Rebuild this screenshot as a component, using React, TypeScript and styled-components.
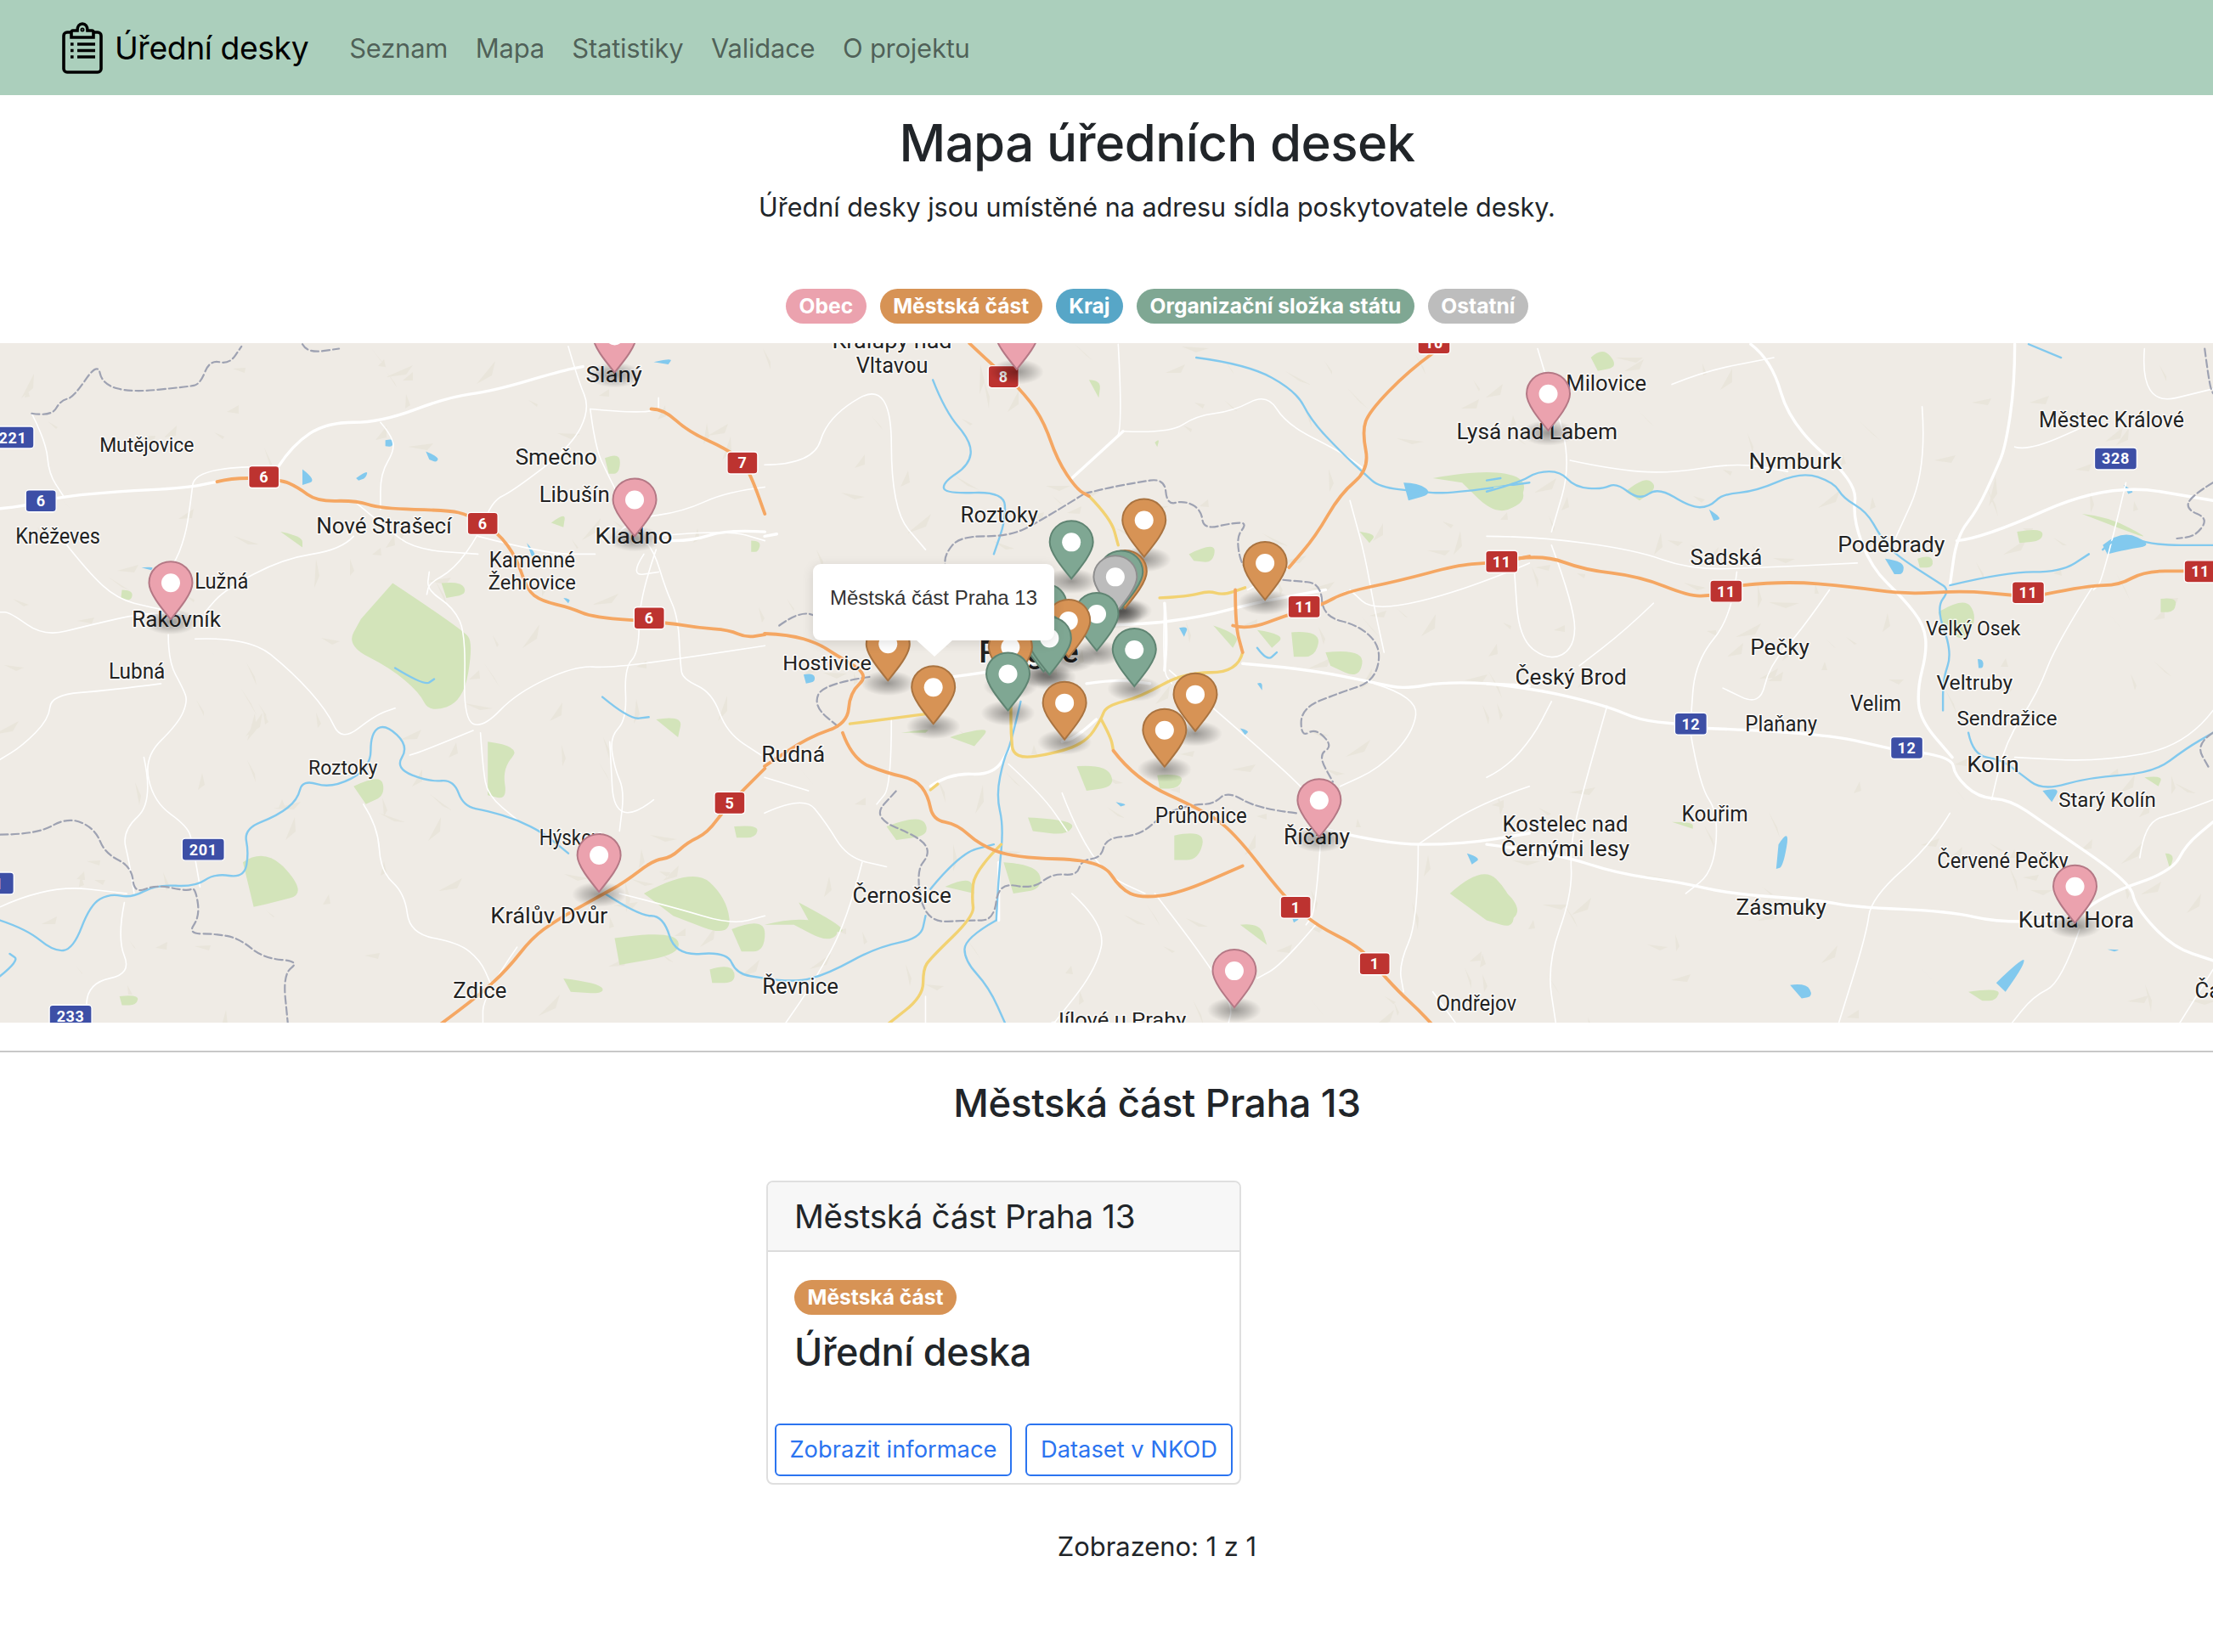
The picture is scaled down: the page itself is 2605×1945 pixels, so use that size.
import React from "react";
import styled, { createGlobalStyle } from "styled-components";

const Global = createGlobalStyle`
  html, body { margin: 0; padding: 0; background: #fff; }
  body { font-family: Inter, "Noto Sans", "Liberation Sans", sans-serif; color: #212529; }
  * { box-sizing: border-box; }
`;

const Navbar = styled.nav`
  height: 112px;
  background: #abcfbc;
  display: flex;
  align-items: center;
  padding-left: 73px;
`;
const Brand = styled.a`
  display: flex;
  align-items: center;
  gap: 14px;
  font-size: 37.3px;
  letter-spacing: -0.4px;
  color: #000;
  margin-right: 48px;
`;
const NavList = styled.div`
  display: flex;
  gap: 32.5px;
`;
const NavLink = styled.a`
  font-size: 31px;
  letter-spacing: -0.25px;
  color: rgba(0, 0, 0, 0.55);
`;
const Intro = styled.header`
  padding-left: 119px;
  text-align: center;
`;
const Title = styled.h1`
  margin: 0;
  padding-top: 22px;
  font-size: 60px;
  line-height: 68px;
  font-weight: 500;
  letter-spacing: -0.6px;
`;
const Lead = styled.p`
  margin: 21px 0 0;
  font-size: 30.5px;
  line-height: 42px;
`;
const BadgeRow = styled.div`
  display: flex;
  justify-content: center;
  gap: 16px;
  margin-top: 75px;
`;
const Badge = styled.span<{ $c: string }>`
  display: inline-block;
  height: 41px;
  line-height: 40px;
  padding: 0 15.5px;
  border-radius: 20.5px;
  background: ${(p) => p.$c};
  color: #fff;
  font-size: 24.6px;
  font-weight: 700;
  white-space: nowrap;
`;
const MapBox = styled.div`
  position: relative;
  height: 800px;
  margin-top: 23px;
  overflow: hidden;
  background: #efebe5;
`;
const MapSvg = styled.svg`
  display: block;
  width: 2605px;
  height: 800px;
`;
const Line = styled.path<{ $k: string }>`
  fill: none;
  stroke-linejoin: round;
  stroke-linecap: round;
  vector-effect: non-scaling-stroke;
  stroke: ${(p) => ({ thin: "#ffffff", main: "#ffffff", water: "#82c9ee", border: "#9ea2b2", yellow: "#f2d272", orange: "#f5a763" } as Record<string, string>)[p.$k]};
  stroke-width: ${(p) => ({ thin: 1.6, main: 3.4, water: 2.4, border: 2.2, yellow: 3.4, orange: 3.8 } as Record<string, number>)[p.$k]}px;
  stroke-dasharray: ${(p) => (p.$k === "border" ? "9 4" : "none")};
`;
const Patch = styled.path<{ $c: string }>`
  fill: ${(p) => p.$c};
  stroke: none;
`;
const ShieldBox = styled.rect<{ $blue?: boolean }>`
  fill: ${(p) => (p.$blue ? "#3d4fa6" : "#bd3330")};
  stroke: #fff;
  stroke-width: 1.4px;
`;
const ShieldText = styled.text`
  fill: #fff;
  font-family: Roboto, "Liberation Sans", sans-serif;
  font-size: 18px;
  font-weight: 700;
  text-anchor: middle;
  letter-spacing: 0.6px;
`;
const Place = styled.text<{ $s: number; $w?: number }>`
  fill: #222;
  font-family: Roboto, "Liberation Sans", sans-serif;
  font-size: ${(p) => p.$s}px;
  font-weight: ${(p) => p.$w ?? 400};
  text-anchor: middle;
  paint-order: stroke;
  stroke: rgba(255, 255, 255, 0.75);
  stroke-width: 3px;
  stroke-linejoin: round;
`;
const PinBody = styled.path<{ $f: string; $s: string }>`
  fill: ${(p) => p.$f};
  stroke: ${(p) => p.$s};
  stroke-width: 2px;
`;
const PinDot = styled.circle`
  fill: #fff;
`;
const Tooltip = styled.div`
  position: absolute;
  left: 957px;
  top: 260px;
  width: 284px;
  height: 90px;
  background: #fff;
  border-radius: 9px;
  padding-top: 26px;
  text-align: center;
  font-family: "Liberation Sans", Arial, sans-serif;
  font-size: 24px;
  line-height: 28px;
  color: #333;
  box-shadow: 0 3px 14px rgba(0, 0, 0, 0.12);
  &::after {
    content: "";
    position: absolute;
    left: 122px;
    top: 90px;
    border-left: 21px solid transparent;
    border-right: 21px solid transparent;
    border-top: 19px solid #fff;
  }
`;
const Divider = styled.hr`
  margin: 33px 0 0;
  border: 0;
  border-top: 2px solid #c8c8c8;
`;
const ResultTitle = styled.h2`
  margin: 32px 0 0;
  padding-left: 119px;
  text-align: center;
  font-size: 45.5px;
  line-height: 56px;
  font-weight: 500;
  letter-spacing: -0.3px;
`;
const Results = styled.section`
  margin-top: 63px;
  padding-left: 902px;
`;
const Card = styled.article`
  width: 559px;
  height: 358px;
  border: 2px solid #dfdfdf;
  border-radius: 8px;
  display: flex;
  flex-direction: column;
  overflow: hidden;
`;
const CardHead = styled.div`
  height: 82px;
  background: #f7f7f7;
  border-bottom: 2px solid #dcdcdc;
  padding-left: 31px;
  font-size: 38.6px;
  line-height: 80px;
  font-weight: 400;
  letter-spacing: -0.3px;
`;
const CardBody = styled.div`
  flex: 1;
  padding: 33px 0 0 31px;
`;
const CardTitle = styled.h5`
  margin: 14px 0 0;
  font-size: 45px;
  line-height: 60px;
  font-weight: 500;
  letter-spacing: -0.4px;
`;
const CardFoot = styled.div`
  display: flex;
  gap: 16px;
  padding: 0 8px 8px;
`;
const OutlineBtn = styled.a<{ $w: number }>`
  display: block;
  width: ${(p) => p.$w}px;
  height: 62px;
  border: 2px solid #2b74f0;
  border-radius: 6px;
  color: #2b74f0;
  text-align: center;
  font-size: 27.3px;
  line-height: 58px;
`;
const Count = styled.p`
  margin: 53px 0 0;
  padding-left: 119px;
  text-align: center;
  font-size: 30.9px;
  line-height: 40px;
`;

const smooth = (s: string) => {
  const n = s.trim().split(/[\s,]+/).map(Number);
  const pts: [number, number][] = [];
  for (let i = 0; i + 1 < n.length; i += 2) pts.push([n[i], n[i + 1]]);
  let d = `M${pts[0][0]} ${pts[0][1]}`;
  for (let i = 1; i < pts.length - 1; i++) {
    const mx = (pts[i][0] + pts[i + 1][0]) / 2;
    const my = (pts[i][1] + pts[i + 1][1]) / 2;
    d += `Q${pts[i][0]} ${pts[i][1]} ${mx} ${my}`;
  }
  const l = pts[pts.length - 1];
  return d + `L${l[0]} ${l[1]}`;
};
const poly = (s: string) => smooth(s) + "Z";

type Layer = { t: string; green: string[]; lakes: string[]; thin: string[]; main: string[]; water: string[]; border: string[]; yellow: string[]; orange: string[] };

const LAYERS: Layer[] = [
  {
    t: "translate(0,-4) scale(.5742,.5258)",
    green: [
      "805 545 950 650 970 680 950 810 880 835 860 790 800 735 710 685 740 625",
      "905 545 945 540 958 570 915 578",
      "1240 265 1272 250 1270 300 1248 300",
      "1130 410 1160 385 1155 420",
      "498 1170 545 1135 630 1240 560 1260 520 1270",
      "1000 900 1070 910 1030 960 1040 1030 1000 1020",
      "1260 1340 1380 1320 1400 1375 1270 1400",
      "1320 1240 1420 1180 1490 1250 1500 1340 1380 1290",
      "1500 1320 1568 1290 1568 1370 1520 1370",
      "1455 1410 1500 1395 1510 1440 1460 1440",
      "725 1000 780 970 790 1020 750 1040",
      "250 560 272 560 270 585 248 578",
      "575 430 620 440 620 465",
      "1345 850 1400 840 1390 890",
      "1505 1090 1555 1085 1550 1115 1510 1115",
      "1540 450 1560 450 1555 475 1540 475",
      "245 1470 285 1465 280 1490 250 1490",
      "1155 1430 1230 1440 1240 1465 1170 1460",
    ],
    lakes: [
      "873 250 900 262 895 275 880 268",
      "620 290 650 315 620 325",
      "790 225 808 220 805 240 790 238",
      "730 310 755 290 750 310 735 315",
      "1340 50 1380 40 1370 55",
      "1080 455 1100 480 1090 485",
      "1155 578 1170 580 1165 590",
      "290 510 315 508 310 516",
    ],
    thin: [
      "1165 15 1185 90 1210 155 1170 240 1050 340 1010 360 980 440 930 515 880 545 875 570",
      "1210 155 1220 240 1245 300 1310 440 1340 470 1365 560 1390 620 1395 730 1400 760 1460 790 1490 880 1560 930",
      "1345 470 1310 580 1310 700 1280 735 1285 850 1250 890 1260 960 1280 1010 1270 1100",
      "1210 155 1350 170 1350 130",
      "1568 330 1490 340 1400 385 1300 400 1250 450",
      "1340 440 1490 425 1568 450",
      "980 440 1120 480 1220 480",
      "1568 685 1420 710 1250 735 1180 730 1060 790 990 870 950 850 955 660 930 600 875 560 880 520",
      "570 285 400 280 390 370 380 440 355 510 310 540",
      "780 185 800 210 810 245 780 300 780 380",
      "730 365 790 420 850 470 980 480",
      "725 440 700 470 580 490 460 560 420 610",
      "65 165 95 230 100 300 130 350",
      "130 450 180 520 240 580 310 600 390 615 300 610 180 640 90 665 20 610 0 610",
      "345 660 345 720 375 780 385 810 365 860 295 935 315 1035 385 1090 395 1130 410 1225",
      "400 670 510 665 600 745 670 830 700 900 770 840 810 825",
      "330 770 225 785 105 795 100 850 45 910 0 940",
      "295 935 315 1035 250 1100 265 1170 275 1240",
      "745 1040 775 1090 780 1190 830 1240 840 1330 940 1350 985 1390 1005 1440",
      "985 880 990 960 1000 1020 1060 1075",
      "1340 1030 1260 1100 1250 900",
      "255 1260 240 1340 270 1420 180 1440 175 1530",
      "0 1270 100 1220 260 1240",
      "970 875 870 920 840 930",
      "1060 1360 990 1470 990 1535",
      "1270 1240 1380 1270 1500 1310 1568 1290",
      "1320 480 1290 530 1350 520",
    ],
    main: [
      "0 378 55 372 120 352 240 340 380 332 445 318",
      "570 285 600 235 670 185 780 185 920 128 1010 115 1150 70 1195 60",
      "1568 430 1490 425 1420 450 1340 450",
    ],
    water: [
      "0 1300 55 1320 110 1370 150 1365 185 1265 225 1240 270 1250 320 1220 400 1225 440 1195 500 1205 510 1150 500 1095 570 1065 610 1030 620 985 680 1005 760 960 760 880 790 860 838 910 810 960 880 990 930 985 950 1045 1000 1055 1060 1075 1115 1105 1165 1150",
      "1240 1240 1310 1290 1360 1290 1385 1380 1490 1370 1510 1420 1568 1430",
      "0 1425 40 1390 20 1375",
      "810 735 870 775 890 760",
      "1235 800 1290 850 1330 845",
    ],
    border: [
      "65 165 105 172 125 135 150 130 200 50 210 100 270 118 385 105 410 100 430 45 470 55 495 15",
      "620 10 630 30 695 20",
      "0 1108 75 1108 140 1068 195 1095 215 1150 270 1180 275 1240 320 1220 385 1235 400 1225 410 1290 385 1330 440 1330 490 1340 540 1385 615 1392 580 1420 590 1530",
    ],
    yellow: [],
    orange: [
      "445 318 480 308 575 313 610 330 650 362 730 360 780 378 920 382 960 392 1020 430 1060 490 1080 560 1110 585 1170 600 1215 622 1365 633 1430 645 1495 650 1530 667 1568 660",
      "1335 155 1360 155 1410 205 1490 245 1525 275 1545 320 1568 390",
      "900 1535 975 1475 1040 1410 1090 1340 1140 1300 1230 1245 1280 1215 1340 1165 1375 1160 1410 1125 1450 1105 1490 1045 1568 960",
    ],
  },
  {
    t: "translate(900,-4) scale(.5742,.5258)",
    green: [
      "870 480 925 450 920 500 880 495",
      "1220 430 1255 435 1240 455",
      "0 1310 70 1290 160 1320 130 1350 60 1310",
      "370 1225 420 1200 430 1240",
      "250 1090 320 1060 340 1110 270 1120",
      "840 1110 905 1095 890 1165 840 1165",
      "975 1310 1015 1305 1030 1355",
      "1405 1240 1470 1175 1530 1240 1540 1320 1480 1300",
      "490 1170 560 1175 570 1230 510 1240",
      "70 1260 140 1300 170 1330 100 1320",
      "640 955 700 950 720 1000 660 1010",
      "1080 655 1140 650 1130 710 1085 710",
      "1150 700 1230 690 1220 760 1160 730",
      "1370 310 1470 290 1568 310 1540 380 1490 385 1430 320",
      "805 975 860 970 850 1005 810 1005",
      "920 640 975 660 960 690",
      "800 230 810 220 805 240",
      "665 90 690 90 685 130",
      "1010 650 1070 660 1040 690",
      "540 1070 640 1075 620 1110 550 1100",
      "280 880 340 870 330 880",
      "380 890 470 860 430 910",
    ],
    lakes: [
      "1310 320 1340 320 1370 345 1320 360",
      "850 645 870 640 860 665",
      "80 750 100 745 105 765 85 770",
      "975 870 995 875 985 885",
      "1010 770 1020 765 1020 785",
      "1080 1290 1100 1295 1085 1305",
      "1440 1150 1470 1160 1450 1175",
      "720 1035 745 1040 730 1045",
    ],
    thin: [
      "725 10 735 205 710 230 630 310",
      "735 205 830 210 885 170 960 160 1030 120 1070 190 1180 250 1230 290",
      "1200 360 1210 400 1230 480 1250 600 1270 700",
      "1075 510 990 560",
      "1190 565 1130 600",
      "820 590 815 740 835 770",
      "830 740 1000 900 1130 1030 1150 1090",
      "1140 1120 1130 1280 1110 1310",
      "800 1240 900 1380 960 1490 950 1535",
      "1130 1310 1060 1400 1010 1430",
      "610 1015 640 1100 700 1200 780 1240",
      "500 950 570 1020 620 1100",
      "1340 1130 1340 1300 1300 1400 1310 1460",
      "1568 1000 1460 1040 1340 1130",
      "0 280 100 280 130 170 260 90 260 380 330 470",
      "0 1060 80 1020 125 1080 170 1160 250 1180",
      "200 1170 170 1300 100 1440 40 1535",
      "260 850 260 1000 230 1040",
      "0 980 90 1010",
      "1250 770 1340 800 1330 880 1260 960 1180 1000",
      "1568 500 1440 560 1250 610 1200 560",
      "1370 1460 1420 1535",
      "630 1240 700 1310 680 1410 590 1535",
      "330 1470 330 1535",
    ],
    main: [
      "0 440 25 435",
      "620 640 760 640 900 620 1000 590 1150 560",
      "980 725 1100 735 1260 770 1310 782 1400 765 1568 775",
      "1130 1090 1265 1130 1430 1130 1568 1105",
      "345 760 500 740 640 700",
      "660 770 720 760 790 770",
      "340 1000 380 970 470 975 505 910",
      "630 310 700 240 735 205",
      "820 590 825 660 820 740",
      "480 1170 480 1300",
      "680 850 640 890 610 900",
    ],
    water: [
      "345 90 370 160 425 230 420 280 365 320 370 345 490 340 495 400 470 480",
      "885 40 990 55 1090 115 1120 180 1180 250 1230 300 1260 330 1340 340 1400 345 1568 320",
      "525 810 505 905 490 940 475 1020 490 1090 480 1200 475 1300",
      "475 1300 410 1340 410 1390 460 1450 495 1535",
      "0 1430 60 1440 130 1420 230 1360 320 1340 330 1290",
      "1010 690 1030 720 1050 700",
      "340 1230 400 1150 470 1130",
    ],
    border: [
      "655 345 690 335 760 320 820 310 825 370 860 360 895 380 900 425 960 410 990 410 965 445 985 530 1085 540 1140 545 1145 620 1220 640 1265 690 1250 765 1180 790 1100 825 1100 890 1130 870 1165 910 1135 930 1165 990",
      "1090 1060 1010 1050 950 1010 920 1040 880 1040 820 1060 770 1110 700 1115 690 1160 650 1165 640 1200 590 1195 550 1230 480 1215 470 1300 420 1300 330 1305 310 1190 340 1150 320 1115 220 1070 270 1010",
      "655 345 560 410 500 440 400 440 370 480 370 510",
      "30 640 80 600 130 640",
      "215 755 120 770 100 820 155 870",
    ],
    yellow: [
      "665 350 710 400 725 460",
      "810 578 870 575 910 562 940 572 985 555",
      "980 700 970 745 860 745 770 800 700 820 690 850 660 900 600 925 510 940 505 880 505 820",
      "690 850 710 890 715 920",
      "175 860 330 838",
      "340 1008 355 995",
      "485 1130 430 1190 425 1250 430 1290 340 1385 325 1410 325 1470 250 1535",
    ],
    orange: [
      "420 8 470 60 520 105 570 175 600 270 640 335 665 350",
      "1370 30 1320 70 1240 160 1225 205 1240 290 1180 345 1130 440 1075 510",
      "965 560 965 640 980 700",
      "960 640 990 650 1075 615 1140 595 1190 565 1300 540 1420 505 1480 500",
      "1545 490 1568 485",
      "0 658 50 660 110 680 145 705 215 750 175 790 170 860 90 890 0 955",
      "160 880 180 940 250 970 310 985 335 1020 345 1075 395 1085 440 1130 510 1160 690 1165 730 1230 770 1250 850 1240 980 1178",
      "715 920 760 985 900 1055 960 1100 1060 1240 1090 1270 1130 1310 1220 1360 1250 1400 1300 1460 1340 1500 1370 1535",
    ],
  },
  {
    t: "translate(1750,-4) scale(.5453,.5258)",
    green: [
      "225 40 250 15 285 60 240 70",
      "15 330 70 320 85 360 40 385 15 370",
      "300 340 340 305 370 330 330 360",
      "975 610 1030 575 1060 620 1030 680 985 640",
      "930 490 960 480 965 510 935 510",
      "1145 430 1200 420 1200 450 1150 455",
      "1455 580 1490 575 1485 610 1455 610",
      "1285 390 1340 395 1440 450 1360 420",
      "0 1210 40 1230 75 1280 40 1310 0 1290",
      "1040 1460 1110 1450 1100 1480 1070 1480",
      "400 1080 445 1080 445 1095",
      "1420 980 1460 975 1450 1000",
      "1465 1150 1485 1150 1475 1185",
    ],
    lakes: [
      "1330 460 1370 425 1440 460 1380 470 1340 480",
      "860 490 900 495 900 525 880 525",
      "655 1445 690 1440 705 1470 680 1475",
      "1100 1440 1160 1380 1160 1400 1120 1460",
      "1200 1010 1240 1000 1220 1035",
      "630 1130 655 1090 640 1180 625 1185",
      "480 380 510 400 490 405",
      "1375 325 1400 340 1385 345",
      "1060 715 1072 715 1072 735 1062 735",
      "1340 1365 1370 1365 1355 1370",
    ],
    thin: [
      "110 20 130 90 185 270 140 430",
      "180 270 270 290 390 300 540 275 650 295",
      "0 440 100 440 320 470 440 515 600 510 800 500",
      "400 100 470 70 620 40",
      "140 460 190 600 190 690 135 720 70 670 60 520",
      "540 520 530 620 450 720 440 860",
      "740 560 680 650 610 730 590 820 510 780",
      "260 820 210 1000 180 1130 185 1240 130 1400 150 1535",
      "440 880 460 1000 500 1060 490 1190 430 1240",
      "1310 550 1230 680 1190 790 1120 900 1090 1030",
      "1140 240 1170 250 1320 180",
      "940 150 950 290 880 450",
      "1420 20 1410 150 1568 110",
      "1380 320 1330 540 1310 560",
      "1000 1060 960 1130 830 1250 820 1330 760 1530",
      "1280 1320 1240 1440 1180 1470 1130 1535",
      "1410 1160 1420 1080 1490 1060 1568 1030",
      "360 590 300 650 200 730",
      "0 980 40 960 100 890 140 810",
      "1568 830 1510 910 1320 945 1140 935",
      "1490 1540 1568 1410",
    ],
    main: [
      "0 770 100 780 260 820 330 852 410 860",
      "475 870 720 880 870 915",
      "940 925 1005 935 1010 975 1060 1025 1130 1030 1200 1080 1390 1215 1400 1270 1480 1360 1568 1390",
      "0 1130 150 1150 280 1195 420 1215 520 1240 720 1255 790 1270 1000 1280 1105 1305 1260 1300 1340 1240 1480 1190 1510 1130 1568 1080",
      "570 10 615 45 655 190 800 320 790 400 830 510 900 580 945 640 950 700 930 780 935 850 1005 935",
      "1140 10 1140 100 1120 240 1100 290 1060 380 1015 440 1000 550",
      "1015 450 1070 445 1340 320 1568 360",
    ],
    water: [
      "0 340 70 320 110 295 160 295 190 330 250 335 280 320 330 360 370 330 440 375 480 375 510 345 580 340 680 295 750 320 770 355 820 385 850 440 880 480 970 540 1000 560 970 600 1005 700 985 760 985 830",
      "1040 880 1050 930 1110 940 1150 970 1200 1010 1300 980 1440 970 1510 915 1568 880",
      "1330 470 1370 430 1430 460 1568 460",
      "1000 550 1120 520 1240 520 1300 480",
      "1170 10 1240 40",
      "0 315 30 310",
    ],
    border: [
      "1568 320 1520 350 1510 380 1558 400 1530 440 1490 445",
      "1568 880 1530 905 1560 960",
      "1550 20 1560 100 1568 120",
    ],
    yellow: [],
    orange: [
      "66 490 125 482 210 515 330 530 440 575 485 572",
      "552 550 640 540 790 553 900 570 1030 562 1135 572",
      "1205 570 1300 550 1365 550 1420 518 1510 518",
    ],
  },
];

const S = 1.6614;
const LABELS: [string, number, number, number][] = [
  ["Slaný", 435, 271, 40],
  ["Kralupy nad", 632, 247, 85],
  ["Vltavou", 632, 264, 51],
  ["Milovice", 1138, 277, 57],
  ["Lysá nad Labem", 1089, 311, 114],
  ["Městec Králové", 1496, 303, 103],
  ["Mutějovice", 104, 320, 67],
  ["Smečno", 394, 329, 58],
  ["Libušín", 407, 356, 50],
  ["Kladno", 449, 385, 55],
  ["Roztoky", 708, 370, 55],
  ["Nymburk", 1272, 332, 66],
  ["Kněževes", 41, 385, 60],
  ["Nové Strašecí", 272, 378, 96],
  ["Kamenné", 377, 402, 61],
  ["Žehrovice", 377, 418, 62],
  ["Sadská", 1223, 400, 51],
  ["Poděbrady", 1340, 391, 76],
  ["Lužná", 157, 417, 38],
  ["Rakovník", 125, 444, 63],
  ["Velký Osek", 1398, 450, 67],
  ["Pečky", 1261, 464, 42],
  ["Hostivice", 586, 475, 63],
  ["Lubná", 97, 481, 40],
  ["Český Brod", 1113, 485, 79],
  ["Veltruby", 1399, 489, 54],
  ["Velim", 1329, 504, 36],
  ["Sendražice", 1422, 514, 71],
  ["Plaňany", 1262, 518, 51],
  ["Rudná", 562, 540, 45],
  ["Roztoky", 243, 549, 49],
  ["Kolín", 1412, 547, 37],
  ["Starý Kolín", 1493, 572, 69],
  ["Průhonice", 851, 583, 65],
  ["Říčany", 933, 598, 47],
  ["Kouřim", 1215, 582, 47],
  ["Kostelec nad", 1109, 589, 89],
  ["Černými lesy", 1109, 607, 91],
  ["Hýskov", 404, 599, 44],
  ["Červené Pečky", 1419, 615, 93],
  ["Černošice", 639, 640, 70],
  ["Zásmuky", 1262, 648, 64],
  ["Králův Dvůr", 389, 654, 83],
  ["Kutná Hora", 1471, 657, 82],
  ["Zdice", 340, 707, 38],
  ["Řevnice", 567, 704, 54],
  ["Ondřejov", 1046, 716, 57],
  ["Jílové u Prahy", 793, 728, 95],
  ["Čáslav", 1578, 707, 46],
];
const SHIELDS: [string, number, number, boolean?][] = [
  ["8", 711, 267], ["10", 1016, 243], ["6", 187, 338], ["7", 526, 328], ["6", 342, 371], ["6", 460, 438],
  ["11", 1064, 398], ["11", 924, 430], ["11", 1223, 419], ["11", 1437, 420], ["11", 1559, 405],
  ["5", 517, 569], ["1", 918, 643], ["1", 974, 683],
  ["221", 9, 310, true], ["6", 29, 355, true], ["328", 1499, 325, true], ["12", 1198, 513, true],
  ["12", 1351, 530, true], ["201", 144, 602, true], ["1", -1, 626, true], ["233", 50, 720, true],
];

const COL: Record<string, [string, string]> = {
  o: ["#d79355", "#a97340"],
  g: ["#7fa793", "#5f8472"],
  p: ["#eba2ae", "#b47885"],
  s: ["#bcbcbc", "#8e8e8e"],
};
const z4 = (x: number, y: number): [number, number] => [x * 0.5742, y * 0.5258 - 4];
const z5 = (x: number, y: number): [number, number] => [900 + x * 0.5742, y * 0.5258 - 4];
const z6 = (x: number, y: number): [number, number] => [1750 + x * 0.5453, y * 0.5258 - 4];
const PINS: { c: string; at: [number, number] }[] = [
  { c: "o", at: z5(778, 488) },
  { c: "o", at: z5(1026, 584) },
  { c: "o", at: z5(253, 765) },
  { c: "o", at: z5(346, 862) },
  { c: "o", at: z5(615, 897) },
  { c: "o", at: z5(883, 878) },
  { c: "o", at: z5(820, 958) },
  { c: "o", at: z5(504, 772) },
  { c: "o", at: z5(623, 713) },
  { c: "o", at: z5(739, 603) },
  { c: "g", at: z5(629, 537) },
  { c: "g", at: z5(731, 604) },
  { c: "s", at: z5(719, 615) },
  { c: "g", at: z5(681, 698) },
  { c: "g", at: z5(758, 778) },
  { c: "g", at: z5(499, 832) },
  { c: "g", at: z5(584, 752) },
  { c: "g", at: z5(572, 745) },
  { c: "g", at: z5(575, 678) },
  { c: "p", at: z4(1260, 75) },
  { c: "p", at: z5(517, 68) },
  { c: "p", at: z4(1301, 442) },
  { c: "p", at: z4(350, 628) },
  { c: "p", at: z4(1228, 1238) },
  { c: "p", at: z5(1137, 1115) },
  { c: "p", at: z5(963, 1497) },
  { c: "p", at: z6(133, 205) },
  { c: "p", at: z6(1270, 1308) },
].sort((a, b) => a.at[1] - b.at[1]);

const KINDS: (keyof Layer)[] = ["thin", "main", "water", "border", "yellow", "orange"];

const seeded = (() => {
  let v = 12345;
  return () => {
    v = (v * 1103515245 + 12345) & 0x7fffffff;
    return v / 0x7fffffff;
  };
})();
const TERRAIN = Array.from({ length: 380 }, () => {
  const x = seeded() * 2605;
  const y = seeded() * 800;
  const l = 10 + seeded() * 26;
  const a = seeded() * 3.14;
  const dx = Math.cos(a) * l;
  const dy = Math.sin(a) * l;
  return `M${x.toFixed(0)} ${y.toFixed(0)}L${(x + dx).toFixed(0)} ${(y + dy).toFixed(0)}L${(x + dx * 0.4 + 5).toFixed(0)} ${(y + dy * 0.4 + 6).toFixed(0)}Z`;
});

const ClipboardIcon = () => (
  <svg width="48" height="61" viewBox="0 0 48 61" fill="none" stroke="#000" strokeWidth="3.6">
    <path d="M6 12h36a4 4 0 0 1 4 4v39a4 4 0 0 1-4 4H6a4 4 0 0 1-4-4V16a4 4 0 0 1 4-4z" />
    <path fill="#abcfbc" d="M11 18v-6q0-2 2-2h5c0-5 2.500-8 6-8s6 3 6 8h5q2 0 2 2v6z" />
    <circle cx="24" cy="9" r="1.600" strokeWidth="1.800" />
    <path d="M18 26h21M18 33.500h21M18 41h21" strokeWidth="3.400" />
    <path d="M10 26h3.600M10 33.500h3.600M10 41h3.600" strokeWidth="3.400" />
  </svg>
);

const MapPin = ({ c, at }: { c: string; at: [number, number] }) => (
  <g transform={`translate(${at[0] - 26.5},${at[1] - 70})`}>
    <PinBody $f={COL[c][0]} $s={COL[c][1]} d="M26.500 1C12 1 1 12 1 26C1 38 15 55 26.500 69C38 55 52 38 52 26C52 12 41 1 26.500 1Z" />
    <PinDot cx="26.500" cy="26" r="11" />
  </g>
);

const MapArt = () => (
  <MapSvg viewBox="0 0 2605 800" role="img" aria-label="Mapa">
    <defs>
      <radialGradient id="pinShadow">
        <stop offset="0" stopColor="#000" stopOpacity="0.36" />
        <stop offset="0.55" stopColor="#000" stopOpacity="0.18" />
        <stop offset="1" stopColor="#000" stopOpacity="0" />
      </radialGradient>
    </defs>
    <Patch $c="#e9e5db" d={TERRAIN.join("")} />
    {LAYERS.map((l) => (
      <g key={l.t} transform={l.t}>
        {l.green.map((g) => (
          <Patch key={g} $c="#d3e4ba" d={poly(g)} />
        ))}
        {l.lakes.map((g) => (
          <Patch key={g} $c="#82c9ee" d={poly(g)} />
        ))}
        {KINDS.map((k) =>
          (l[k] as string[]).map((d, i) => <Line key={k + i} $k={k} d={smooth(d)} />)
        )}
      </g>
    ))}
    {SHIELDS.map(([t, x, y, blue]) => {
      const w = t.length === 3 ? 50 : t.length === 2 ? 38 : 36;
      const cx = x * S;
      const cy = y * S - 404;
      return (
        <g key={`${t}${x}`}>
          <ShieldBox $blue={blue} x={cx - w / 2} y={cy - 13} width={w} height={26} rx={4} />
          <ShieldText x={cx} y={cy + 6.500}>{t}</ShieldText>
        </g>
      );
    })}
    <Place $s={37} $w={500} x={1211} y={376}>Prague</Place>
    {LABELS.map(([t, x, y, w]) => (
      <Place
        key={t + x}
        $s={w / t.length > 7.1 ? 26 : 23}
        x={x * S}
        y={y * S - 404}
        textLength={w * S}
        lengthAdjust="spacingAndGlyphs"
      >
        {t}
      </Place>
    ))}
    {PINS.map((p, i) => (
      <ellipse key={i} cx={p.at[0]} cy={p.at[1] + 2} rx="32" ry="15" fill="url(#pinShadow)" />
    ))}
    {PINS.map((p, i) => (
      <MapPin key={i} c={p.c} at={p.at} />
    ))}
  </MapSvg>
);

const CATEGORIES: [string, string][] = [
  ["Obec", "#eba2ae"],
  ["Městská část", "#d79355"],
  ["Kraj", "#57a6c7"],
  ["Organizační složka státu", "#7fa793"],
  ["Ostatní", "#bdbdbd"],
];

export default function App() {
  return (
    <>
      <Global />
      <Navbar>
        <Brand>
          <ClipboardIcon />
          Úřední desky
        </Brand>
        <NavList>
          {["Seznam", "Mapa", "Statistiky", "Validace", "O projektu"].map((n) => (
            <NavLink key={n}>{n}</NavLink>
          ))}
        </NavList>
      </Navbar>
      <Intro>
        <Title>Mapa úředních desek</Title>
        <Lead>Úřední desky jsou umístěné na adresu sídla poskytovatele desky.</Lead>
        <BadgeRow>
          {CATEGORIES.map(([n, c]) => (
            <Badge key={n} $c={c}>{n}</Badge>
          ))}
        </BadgeRow>
      </Intro>
      <MapBox>
        <MapArt />
        <Tooltip>Městská část Praha 13</Tooltip>
      </MapBox>
      <Divider />
      <ResultTitle>Městská část Praha 13</ResultTitle>
      <Results>
        <Card>
          <CardHead>Městská část Praha 13</CardHead>
          <CardBody>
            <Badge $c="#d79355">Městská část</Badge>
            <CardTitle>Úřední deska</CardTitle>
          </CardBody>
          <CardFoot>
            <OutlineBtn $w={280}>Zobrazit informace</OutlineBtn>
            <OutlineBtn $w={245}>Dataset v NKOD</OutlineBtn>
          </CardFoot>
        </Card>
      </Results>
      <Count>Zobrazeno: 1 z 1</Count>
    </>
  );
}
